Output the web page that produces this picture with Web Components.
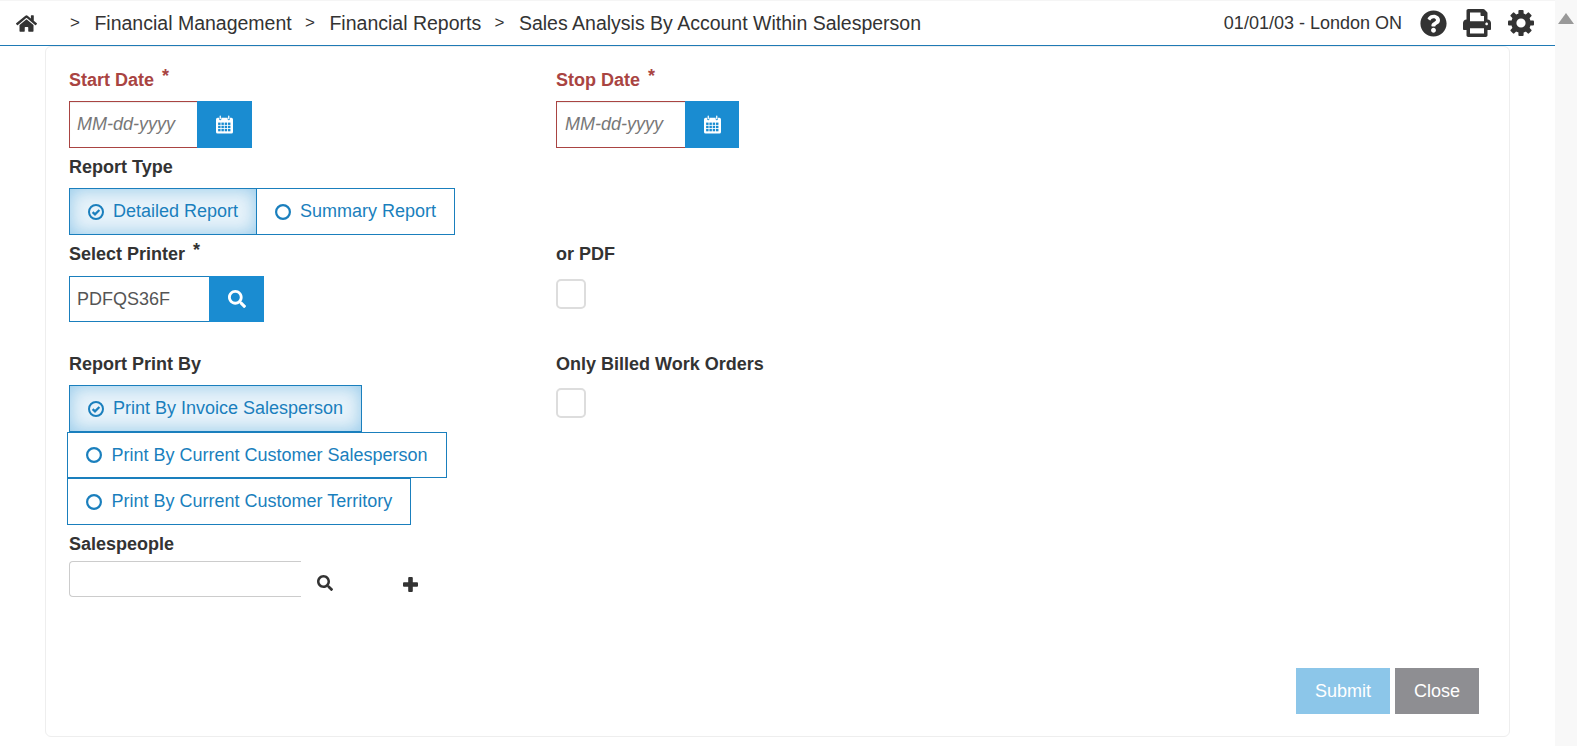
<!DOCTYPE html>
<html>
<head>
<meta charset="utf-8">
<title>Sales Analysis By Account Within Salesperson</title>
<style>
  html, body { margin: 0; height: 100%; overflow: hidden; background: #fff; }
  body { font-family: "Liberation Sans", Arial, sans-serif; color: #333; }
</style>
</head>
<body>
<app-page>
  <top-bar></top-bar>
  <report-form></report-form>
</app-page>

<script>
const ICONS = {
    home: ['0 0 576 512', 'M280.37 148.26L96 300.11V464a16 16 0 0 0 16 16l112.06-.29a16 16 0 0 0 15.92-16V368a16 16 0 0 1 16-16h64a16 16 0 0 1 16 16v95.64a16 16 0 0 0 16 16.05L464 480a16 16 0 0 0 16-16V300L295.67 148.26a12.19 12.19 0 0 0-15.3 0zM571.6 251.47L488 182.56V44.05a12 12 0 0 0-12-12h-56a12 12 0 0 0-12 12v72.61L318.47 43a48 48 0 0 0-61 0L4.34 251.47a12 12 0 0 0-1.6 16.9l25.5 31A12 12 0 0 0 45.15 301l235.22-193.74a12.19 12.19 0 0 1 15.3 0L530.9 301a12 12 0 0 0 16.9-1.6l25.5-31a12 12 0 0 0-1.7-16.93z'],
    help: ['0 0 512 512', 'M504 256c0 136.997-111.043 248-248 248S8 392.997 8 256C8 119.083 119.043 8 256 8s248 111.083 248 248zM262.655 90c-54.497 0-89.255 22.957-116.549 63.758-3.536 5.286-2.353 12.415 2.715 16.258l34.699 26.31c5.205 3.947 12.621 3.008 16.665-2.122 17.864-22.658 30.113-35.797 57.303-35.797 20.429 0 45.698 13.148 45.698 32.958 0 14.976-12.363 22.667-32.534 33.976C247.128 238.528 216 254.941 216 296v4c0 6.627 5.373 12 12 12h56c6.627 0 12-5.373 12-12v-1.333c0-28.462 83.186-29.647 83.186-106.667 0-58.002-60.165-102-116.531-102zM256 338c-25.365 0-46 20.635-46 46 0 25.364 20.635 46 46 46s46-20.636 46-46c0-25.365-20.635-46-46-46z'],
    print: ['0 0 512 512', 'M448 192V77.25c0-8.49-3.37-16.62-9.37-22.63L393.37 9.37c-6-6-14.14-9.37-22.63-9.37H96C78.33 0 64 14.33 64 32v160c-35.35 0-64 28.65-64 64v112c0 8.84 7.16 16 16 16h48v96c0 17.67 14.33 32 32 32h320c17.67 0 32-14.33 32-32v-96h48c8.84 0 16-7.16 16-16V256c0-35.35-28.65-64-64-64zm-64 256H128v-96h256v96zm0-224H128V64h192v48c0 8.84 7.16 16 16 16h48v96zm48 72c-13.25 0-24-10.75-24-24 0-13.26 10.75-24 24-24s24 10.74 24 24c0 13.25-10.75 24-24 24z'],
    search: ['0 0 512 512', 'M505 442.7L405.3 343c-4.5-4.5-10.6-7-17-7H372c27.6-35.3 44-79.7 44-128C416 93.1 322.9 0 208 0S0 93.1 0 208s93.1 208 208 208c48.3 0 92.7-16.4 128-44v16.3c0 6.4 2.5 12.5 7 17l99.7 99.7c9.4 9.4 24.6 9.4 33.9 0l28.3-28.3c9.4-9.4 9.4-24.6.1-34zM208 336c-70.7 0-128-57.2-128-128 0-70.7 57.2-128 128-128 70.7 0 128 57.2 128 128 0 70.7-57.2 128-128 128z']
};

function icon(name, w, h) {
    const [box, d] = ICONS[name];
    return `<svg width="${w}" height="${h}" viewBox="${box}" fill="currentColor"><path d="${d}"/></svg>`;
}

// eight square teeth round a ring
function cogIcon() {
    let teeth = '';
    for (let a = 0; a < 360; a += 45) {
        teeth += `<rect x="10.4" y="0" width="5.2" height="6" rx="1" transform="rotate(${a} 13 13)"/>`;
    }
    return `<svg width="26" height="26" viewBox="0 0 26 26" fill="currentColor">
        ${teeth}<circle cx="13" cy="13" r="7.2" fill="none" stroke="currentColor" stroke-width="5.2"/>
    </svg>`;
}

function plusIcon() {
    return `<svg width="15" height="15" viewBox="0 0 15 15" fill="currentColor">
        <rect x="5.2" y="0" width="4.6" height="15" rx="1"/><rect x="0" y="5.2" width="15" height="4.6" rx="1"/>
    </svg>`;
}

// calendar with the little grid of days, drawn on a 16x17 box
function calendarIcon() {
    let cells = '';
    for (let r = 0; r < 3; r++) {
        for (let c = 0; c < 4; c++) {
            cells += `<rect x="${2 + c * 3.1}" y="${6.7 + r * 3}" width="2.3" height="2.2" fill="#1a8cd1"/>`;
        }
    }
    return `<svg width="17" height="19" viewBox="0 0 16 17">
        <path d="M1.5 2.2H3V3.6a1 1 0 0 0 2 0V2.2H11V3.6a1 1 0 0 0 2 0V2.2h1.5A1.5 1.5 0 0 1 16 3.7V15.5A1.5 1.5 0 0 1 14.5 17H1.5A1.5 1.5 0 0 1 0 15.5V3.7A1.5 1.5 0 0 1 1.5 2.2z" fill="#fff"/>
        <rect x="3.4" y="0" width="1.2" height="3.6" rx=".6" fill="#fff"/>
        <rect x="11.4" y="0" width="1.2" height="3.6" rx=".6" fill="#fff"/>
        ${cells}
    </svg>`;
}

class AppPage extends HTMLElement {
    connectedCallback() {
        this.attachShadow({ mode: 'open' });
        this.shadowRoot.innerHTML = `
            <style>
                :host { display: flex; height: 746px; overflow: hidden; }
                .main { width: 1555px; flex: none; display: flex; flex-direction: column; }
                .scroll { flex: 1; background: #f8f8f8; display: flex; justify-content: center; padding-top: 13px; box-sizing: border-box; }
                .scroll i { width: 0; height: 0; border-left: 8px solid transparent; border-right: 8px solid transparent; border-bottom: 11px solid #999; }
            </style>
            <div class="main"><slot></slot></div>
            <div class="scroll"><i></i></div>
        `;
    }
}

class TopBar extends HTMLElement {
    connectedCallback() {
        this.attachShadow({ mode: 'open' });
        const crumbs = ['Financial Management', 'Financial Reports', 'Sales Analysis By Account Within Salesperson'];
        this.shadowRoot.innerHTML = `
            <style>
                :host { display: flex; align-items: center; height: 44px; flex: none; border-top: 1px solid #f5f5f5; border-bottom: 1px solid #1f7ab5; background: #fff; color: #333; padding: 0 21px 0 16px; font-size: 19.5px; }
                .home { display: flex; width: 54px; flex: none; }
                .crumb { display: flex; align-items: center; white-space: nowrap; }
                .sep { font-size: 17px; margin-right: 14.5px; }
                .crumb span:last-child { margin-right: 13.3px; }
                .right { margin-left: auto; display: flex; align-items: center; }
                .when { font-size: 18px; margin-right: 18px; }
                .btn { display: flex; }
                .btn + .btn { margin-left: 16px; }
                .btn:last-child { margin-left: 17px; }
            </style>
            <span class="home">${icon('home', 21, 19)}</span>
            ${crumbs.map(c => `<span class="crumb"><span class="sep">&gt;</span><span>${c}</span></span>`).join('')}
            <div class="right">
                <span class="when">01/01/03 - London ON</span>
                <span class="btn">${icon('help', 27, 27)}</span>
                <span class="btn">${icon('print', 28, 28)}</span>
                <span class="btn">${cogIcon()}</span>
            </div>
        `;
    }
}

class FieldLabel extends HTMLElement {
    connectedCallback() {
        this.attachShadow({ mode: 'open' });
        const star = this.hasAttribute('required') ? '<sup>*</sup>' : '';
        this.shadowRoot.innerHTML = `
            <style>
                :host { display: block; font-size: 18px; font-weight: 700; line-height: 20px; color: #333; white-space: nowrap; }
                :host([invalid]) { color: #a94442; }
                sup { font-size: 18px; line-height: 0; position: relative; top: 2.5px; vertical-align: super; margin-left: 3px; }
            </style>
            <slot></slot> ${star}
        `;
    }
}

class InputGroup extends HTMLElement {
    connectedCallback() {
        this.attachShadow({ mode: 'open' });
        const kind = this.getAttribute('kind');
        const value = this.getAttribute('value') || '';
        const holder = this.getAttribute('placeholder') || '';
        const width = this.getAttribute('width');
        const goWidth = this.getAttribute('go-width') || 55;
        const pad = this.getAttribute('pad') || 7;
        this.shadowRoot.innerHTML = `
            <style>
                :host { display: flex; height: ${kind === 'date' ? 47 : 46}px; }
                .box { width: ${width}px; box-sizing: border-box; border: 1px solid #1a7fbd; border-right: 0; display: flex; align-items: center; padding-left: ${pad}px; font-size: 18px; color: #555; background: #fff; }
                :host([invalid]) .box { border-color: #a94442; box-shadow: inset 0 1px 1px rgba(0,0,0,.075); }
                .holder { font-style: italic; color: #777; }
                .go { width: ${goWidth}px; background: #1a8cd1; color: #fff; display: flex; align-items: center; justify-content: center; }
            </style>
            <div class="box">${value ? `<span>${value}</span>` : `<span class="holder">${holder}</span>`}</div>
            <div class="go">${kind === 'date' ? calendarIcon() : icon('search', 18, 18)}</div>
        `;
    }
}

class RadioTab extends HTMLElement {
    connectedCallback() {
        this.attachShadow({ mode: 'open' });
        const on = this.hasAttribute('checked');
        const mark = on
            ? `<svg width="16" height="16" viewBox="0 0 16 16"><circle cx="8" cy="8" r="7" fill="none" stroke="#1a7fbd" stroke-width="2"/><path d="M4.6 8.1l2.4 2.3 4.4-4.4" fill="none" stroke="#1a7fbd" stroke-width="2.2"/></svg>`
            : `<svg width="16" height="16" viewBox="0 0 16 16"><circle cx="8" cy="8" r="6.9" fill="none" stroke="#1a7fbd" stroke-width="2.2"/></svg>`;
        this.shadowRoot.innerHTML = `
            <style>
                :host { display: inline-flex; align-items: center; box-sizing: border-box; height: 47px; border: 1px solid #1a7fbd; padding: 0 18px; gap: 9px; font-size: 18px; color: #1a7fbd; white-space: nowrap; background: #fff; }
                :host([checked]) { background: #e8f3fa; box-shadow: inset 0 0 18px rgba(26,140,209,.42); }
                svg { flex: none; }
            </style>
            ${mark}<slot></slot>
        `;
    }
}

class ReportForm extends HTMLElement {
    connectedCallback() {
        this.attachShadow({ mode: 'open' });
        this.shadowRoot.innerHTML = `
            <style>
                :host { display: flex; flex-direction: column; box-sizing: border-box; width: 1465px; height: 691px; margin-left: 45px; padding: 23px 22px 22px 23px; border: 1px solid #eee; border-radius: 6px; background: #fff; }
                .cols { display: grid; grid-template-columns: 487px 1fr; }
                field-label { margin-bottom: 11px; }
                .stack { display: flex; flex-direction: column; align-items: flex-start; }
                .pair { display: flex; }
                .pair radio-tab + radio-tab { margin-left: -1px; }
                .report-type { margin-top: 9px; }
                .report-type field-label { margin-bottom: 11px; }
                .printer { margin-top: 9px; }
                .printer field-label { margin-bottom: 12px; }
                .check { width: 30px; height: 30px; box-sizing: border-box; border: 2px solid #ddd; border-radius: 5px; margin-top: 15px; }
                .by-row { margin-top: 32px; }
                .by-row field-label { margin-bottom: 11px; }
                .by-row .check { margin-top: 14px; }
                .shift { margin-left: -2px; height: 46px; gap: 9.5px; padding-right: 18.5px; }
                .shift.last { height: 47px; padding-right: 17.5px; }
                .salespeople { margin-top: 9px; }
                .salespeople field-label { margin-bottom: 7px; }
                .lookup { display: flex; align-items: center; height: 36px; }
                .lookup .box { width: 232px; height: 36px; box-sizing: border-box; border: 1px solid #ccc; border-right: 0; border-radius: 4px 0 0 4px; }
                .lookup .find { display: flex; margin: 8px 0 0 16px; color: #333; }
                .lookup .add { display: flex; margin: 10px 0 0 70px; color: #333; }
                .actions { margin-top: auto; display: flex; justify-content: flex-end; gap: 5px; padding-right: 8px; }
                .actions div { height: 46px; display: flex; align-items: center; justify-content: center; color: #fff; font-size: 18px; }
                .submit { width: 94px; background: #8cc6e9; }
                .close { width: 84px; background: #8e8e92; }
            </style>
            <div class="cols">
                <div>
                    <field-label invalid required>Start Date</field-label>
                    <input-group invalid kind="date" width="128" placeholder="MM-dd-yyyy"></input-group>
                </div>
                <div>
                    <field-label invalid required>Stop Date</field-label>
                    <input-group invalid kind="date" width="129" go-width="54" pad="8" placeholder="MM-dd-yyyy"></input-group>
                </div>
            </div>
            <div class="report-type">
                <field-label>Report Type</field-label>
                <div class="pair">
                    <radio-tab checked>Detailed Report</radio-tab>
                    <radio-tab>Summary Report</radio-tab>
                </div>
            </div>
            <div class="cols printer">
                <div>
                    <field-label required>Select Printer</field-label>
                    <input-group kind="search" width="140" value="PDFQS36F"></input-group>
                </div>
                <div>
                    <field-label>or PDF</field-label>
                    <div class="check"></div>
                </div>
            </div>
            <div class="cols by-row">
                <div class="stack">
                    <field-label>Report Print By</field-label>
                    <radio-tab checked>Print By Invoice Salesperson</radio-tab>
                    <radio-tab class="shift">Print By Current Customer Salesperson</radio-tab>
                    <radio-tab class="shift last">Print By Current Customer Territory</radio-tab>
                </div>
                <div>
                    <field-label>Only Billed Work Orders</field-label>
                    <div class="check"></div>
                </div>
            </div>
            <div class="salespeople">
                <field-label>Salespeople</field-label>
                <div class="lookup">
                    <div class="box"></div>
                    <span class="find">${icon('search', 16, 16)}</span>
                    <span class="add">${plusIcon()}</span>
                </div>
            </div>
            <div class="actions">
                <div class="submit">Submit</div>
                <div class="close">Close</div>
            </div>
        `;
    }
}

customElements.define('app-page', AppPage);
customElements.define('top-bar', TopBar);
customElements.define('field-label', FieldLabel);
customElements.define('input-group', InputGroup);
customElements.define('radio-tab', RadioTab);
customElements.define('report-form', ReportForm);
</script>
</body>
</html>
